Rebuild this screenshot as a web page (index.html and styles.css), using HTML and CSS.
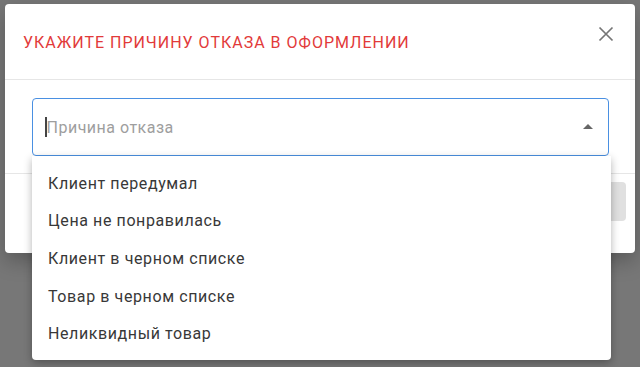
FILE: index.html
```html
<!DOCTYPE html>
<html lang="ru">
<head>
  <meta charset="UTF-8" />
  <meta name="viewport" content="width=device-width, initial-scale=1.0"/>
  <title>Причина отказа</title>
  <link rel="stylesheet" href="styles.css">
</head>
<body>
  <!-- Диалог -->
  <div class="dialog">
    <div class="dialog-header">
      <h2 class="dialog-title">Укажите причину отказа в оформлении</h2>
      <button class="btn-close" type="button" aria-label="Закрыть">
        <svg width="16" height="16" viewBox="0 0 16 16">
          <path d="M1.5 1.5 L14.5 14.5 M14.5 1.5 L1.5 14.5" stroke="#757575" stroke-width="1.7" fill="none"/>
        </svg>
      </button>
    </div>

    <div class="dialog-content">
      <div class="select-box">
        <span class="caret"></span>
        <span class="placeholder">Причина отказа</span>
        <svg class="arrow" width="10" height="5" viewBox="0 0 10 5">
          <path d="M0 5 L5 0 L10 5 Z" fill="#666"/>
        </svg>

        <!-- выпадающий список -->
        <ul class="menu-list">
          <li>Клиент передумал</li>
          <li>Цена не понравилась</li>
          <li>Клиент в черном списке</li>
          <li>Товар в черном списке</li>
          <li>Неликвидный товар</li>
        </ul>
      </div>
    </div>

    <div class="dialog-footer">
      <button class="btn-cancel" type="button">Отмена</button>
      <button class="btn-ok" type="button">Сохранить</button>
    </div>
  </div>
</body>
</html>
```

FILE: styles.css
```css
* {
  box-sizing: border-box;
  margin: 0;
  padding: 0;
  font-family: 'Roboto', 'Noto Sans', sans-serif;
}

body {
  width: 640px;
  height: 367px;
  overflow: hidden;
  background-color: #777777;
  padding: 4px 5px 0 5px;
}

/*********DIALOG***********/
.dialog {
  background: white;
  border-radius: 4px;
  width: 630px;
  height: 249px;
  box-shadow: 0 8px 20px rgba(0, 0, 0, 0.25);
  display: flex;
  flex-direction: column;
}

.dialog-header {
  height: 76px;
  display: flex;
  align-items: center;
  justify-content: space-between;
  padding: 0 21px 0 18px;
  border-bottom: 1px solid #e6e6e6;
}

.dialog-title {
  font-size: 16px;
  font-weight: 400;
  text-transform: uppercase;
  letter-spacing: 1px;
  color: #e23a3a;
  margin-top: 2px;
}

.btn-close {
  border: none;
  background: none;
  width: 16px;
  height: 16px;
  margin-top: -15px;
  cursor: pointer;
}

.btn-close svg {
  display: block;
}

/**********SELECT*************/
.dialog-content {
  padding: 18px 26px 17px 27px;
  border-bottom: 1px solid #e6e6e6;
}

.select-box {
  position: relative;
  height: 58px;
  border: 1.5px solid #4a90e2;
  border-radius: 4px;
  display: flex;
  align-items: center;
  padding: 0 15px 0 12px;
}

.caret {
  width: 1.5px;
  height: 20px;
  background: #444;
}

.placeholder {
  flex: 1;
  font-size: 16px;
  color: #9e9e9e;
  letter-spacing: 0.5px;
}

.arrow {
  display: block;
  margin-top: -2px;
}

.menu-list {
  list-style: none;
  position: absolute;
  top: 57px;
  left: -1px;
  width: 579px;
  background: white;
  border-radius: 0 0 4px 4px;
  padding: 8px 0;
  box-shadow: 0 3px 8px rgba(0, 0, 0, 0.3);
  z-index: 10;
}

.menu-list li {
  height: 37.6px;
  display: flex;
  align-items: center;
  padding: 1px 16px 0 16px;
  font-size: 16px;
  color: #383838;
  letter-spacing: 0.6px;
}

/**********FOOTER*************/
.dialog-footer {
  flex: 1;
  display: flex;
  justify-content: flex-end;
  align-items: flex-start;
  gap: 8px;
  padding: 8px 9px;
}

.btn-cancel,
.btn-ok {
  height: 39px;
  padding: 0 16px;
  border: none;
  border-radius: 4px;
  background: #e0e0e0;
  color: #333;
  font-size: 14px;
  text-transform: uppercase;
}
```
